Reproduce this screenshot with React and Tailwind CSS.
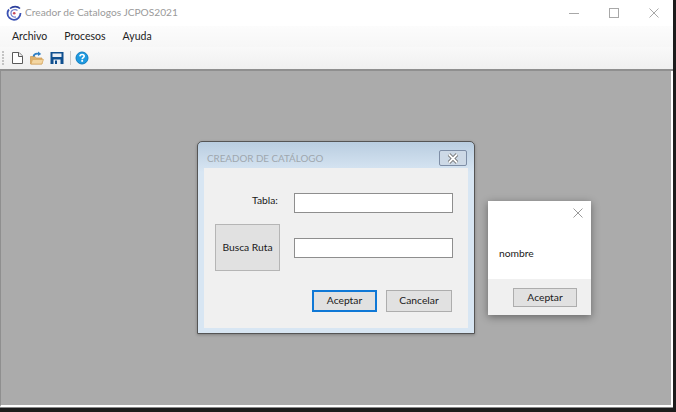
import React from "react";

function Logo() {
  return (
    <svg width="16" height="16" viewBox="0 0 16 16" className="shrink-0">
      <path d="M4 3.5C7 1 11.5 1 14 3.5" fill="none" stroke="#2c3f9c" strokeWidth="1.6" />
      <path d="M14.5 8C14.5 12 11.5 14.8 8 14.8C4.5 14.8 1.5 12 1.5 8.5C1.5 7 2 5.5 3 4.5" fill="none" stroke="#3b52b4" strokeWidth="1.8" />
      <path d="M11.5 5.5C10.5 4.6 9 4.3 7.6 4.8C5.6 5.5 4.6 7.6 5.2 9.6C5.9 11.6 8 12.6 10 11.9" fill="none" stroke="#6f80cc" strokeWidth="1.2" />
      <circle cx="8.2" cy="8.3" r="1.3" fill="#c8485a" />
    </svg>
  );
}

function Grip() {
  return (
    <div className="flex flex-col gap-[1px] w-[2px] mr-[5px]">
      {[0, 1, 2, 3, 4].map((i) => (
        <div key={i} className="w-[2px] h-[2px] bg-[#c4c4c4]" />
      ))}
    </div>
  );
}

function NewIcon() {
  return (
    <svg width="16" height="16" viewBox="0 0 16 16">
      <path d="M3.5 2.5H10L13.5 6V13.5H3.5Z" fill="#fff" stroke="#5a5a5a" />
      <path d="M9.5 2.5V6.5H13.5" fill="#eee" stroke="#5a5a5a" />
    </svg>
  );
}

function OpenIcon() {
  return (
    <svg width="16" height="16" viewBox="0 0 16 16">
      <path d="M1.5 6.5H6L7 8H13V14H1.5Z" fill="#dfb06a" stroke="#cfa05a" strokeWidth="0.8" />
      <path d="M2 14L3.5 9.5H14.5L12.8 14Z" fill="#f3d6a2" stroke="#d7a860" strokeWidth="0.7" />
      <path d="M4.5 6.5C5 4.2 7 3.4 9.5 3.8" fill="none" stroke="#2f7fc4" strokeWidth="1.8" />
      <path d="M9 1.6L12.2 4L9 6Z" fill="#2f7fc4" />
    </svg>
  );
}

function SaveIcon() {
  return (
    <svg width="16" height="16" viewBox="0 0 16 16">
      <path d="M1.5 2H14.5V14H1.5Z" fill="#0f4f8f" />
      <rect x="3.5" y="3.5" width="9" height="3.5" fill="#e9eef4" />
      <rect x="4.5" y="9.5" width="7" height="4.5" fill="#e9eef4" />
      <rect x="6" y="10.5" width="2" height="3.5" fill="#0f4f8f" />
    </svg>
  );
}

function HelpIcon() {
  return (
    <svg width="16" height="16" viewBox="0 0 16 16">
      <circle cx="8" cy="8" r="6" fill="#1e9ae0" stroke="#0f7cc0" />
      <path d="M5.9 6.4C6 5.1 6.9 4.5 8.1 4.5C9.3 4.5 10.2 5.2 10.2 6.2C10.2 7.6 8.2 7.7 8.2 9.2" fill="none" stroke="#fff" strokeWidth="1.6" />
      <rect x="7.3" y="10" width="1.8" height="1.8" fill="#fff" />
    </svg>
  );
}

function Btn({ className, children }) {
  return (
    <button className={"flex items-center justify-center bg-[#e1e1e1] text-[10.3px] text-[#1a1a1a] " + className}>
      {children}
    </button>
  );
}

export default function App() {
  return (
    <div className="w-[676px] h-[412px] flex flex-col overflow-hidden bg-[#1c1c1c] font-['Lato',sans-serif]">
      <div className="flex-1 min-h-0 flex">
        <div className="flex-1 min-w-0 flex flex-col">
          <div className="h-[26px] shrink-0 flex items-center bg-white pl-[6px]">
            <Logo />
            <span className="ml-[3px] text-[10.2px] text-[#9a9a9a]">Creador de Catalogos JCPOS2021</span>
            <div className="ml-auto flex items-center gap-[30px] pr-[14px]">
              <svg width="10" height="10" viewBox="0 0 10 10"><path d="M0 5.5H10" stroke="#a8a8a8" /></svg>
              <svg width="10" height="10" viewBox="0 0 10 10"><rect x="0.5" y="0.5" width="9" height="9" fill="none" stroke="#a8a8a8" /></svg>
              <svg width="10" height="10" viewBox="0 0 10 10"><path d="M0.5 0.5L9.5 9.5M9.5 0.5L0.5 9.5" stroke="#a8a8a8" /></svg>
            </div>
          </div>
          <div className="h-[21px] shrink-0 flex items-center gap-[17px] pl-[12px] bg-gradient-to-b from-[#fcfcfc] to-[#f7f7f7] text-[10.5px] text-[#222]">
            <span>Archivo</span>
            <span>Procesos</span>
            <span>Ayuda</span>
          </div>
          <div className="h-[22px] shrink-0 flex items-center pl-[2px] bg-gradient-to-b from-[#f9f9f9] to-[#f0f0f0]">
            <Grip />
            <div className="flex items-center gap-[4px]">
              <NewIcon />
              <OpenIcon />
              <SaveIcon />
            </div>
            <div className="w-px h-[14px] bg-[#c8c8c8] ml-[5px] mr-[3px]" />
            <HelpIcon />
          </div>
          <div className="h-[2px] shrink-0 bg-[#8f8f8f]" />
          <div className="relative flex-1 min-h-0 bg-[#ababab] border-l border-l-[#8f8f8f] border-r-2 border-r-white border-b-2 border-b-white">
            <div className="absolute left-[196px] top-[70px] w-[278px] h-[193px] flex flex-col rounded-t-[5px] border border-[#555] bg-[linear-gradient(#b9cde0,#d8e6f3_30px)] shadow-[0_1px_3px_rgba(0,0,0,0.25)]">
              <div className="h-[26px] shrink-0 flex items-center pt-[6px] pl-[9px] pr-[7px]">
                <span className="text-[9.8px] text-[#9fa7ae]">CREADOR DE CATÁLOGO</span>
                <div className="ml-auto w-[28px] h-[16px] rounded-[2px] border border-[#7e8ea6] bg-[#cdd9e6] flex items-center justify-center">
                  <svg width="14" height="11" viewBox="0 0 14 11"><path d="M3 1.5L11 9.5M11 1.5L3 9.5" stroke="#555" strokeWidth="3.4" /><path d="M3 1.5L11 9.5M11 1.5L3 9.5" stroke="#fff" strokeWidth="2" /></svg>
                </div>
              </div>
              <div className="flex-1 mx-[6px] mb-[5px] bg-[#f0f0f0] flex flex-col">
                <div className="flex items-start mt-[25px] pl-[48px]">
                  <span className="w-[26px] h-[20px] leading-[14px] text-[10.3px] text-[#1a1a1a] whitespace-nowrap">Tabla:</span>
                  <div className="ml-[16px] w-[159px] h-[20px] bg-white border border-[#8e8e8e]" />
                </div>
                <div className="flex items-center mt-[11px] pl-[11px]">
                  <Btn className="w-[65px] h-[47px] border border-[#b5b5b5]">Busca Ruta</Btn>
                  <div className="ml-[14px] w-[159px] h-[20px] bg-white border border-[#8e8e8e]" />
                </div>
                <div className="flex items-center mt-[19px] pl-[108px] gap-[9px]">
                  <Btn className="w-[65px] h-[22px] border-2 border-[#0f78d6]">Aceptar</Btn>
                  <Btn className="w-[66px] h-[22px] border border-[#adadad]">Cancelar</Btn>
                </div>
              </div>
            </div>
            <div className="absolute left-[487px] top-[130px] w-[103px] h-[114px] flex flex-col bg-white shadow-[0_2px_8px_rgba(0,0,0,0.4)]">
              <div className="h-[78px] shrink-0 flex flex-col pl-[11px] pr-[8px]">
                <div className="flex justify-end pt-[7px]">
                  <svg width="10" height="10" viewBox="0 0 10 10"><path d="M0.5 0.5L9.5 9.5M9.5 0.5L0.5 9.5" stroke="#9a9a9a" /></svg>
                </div>
                <span className="mt-[28px] text-[10.3px] text-[#1a1a1a]">nombre</span>
              </div>
              <div className="flex-1 bg-[#f0f0f0] flex items-start pt-[9px] pl-[25px]">
                <Btn className="w-[64px] h-[19px] border border-[#adadad]">Aceptar</Btn>
              </div>
            </div>
          </div>
          <div className="h-px shrink-0 bg-[#8a8a8a]" />
        </div>
        <div className="w-[3px] shrink-0 bg-[#1c1c1c]" />
      </div>
      <div className="h-[4px] shrink-0 bg-[#1c1c1c]" />
    </div>
  );
}
